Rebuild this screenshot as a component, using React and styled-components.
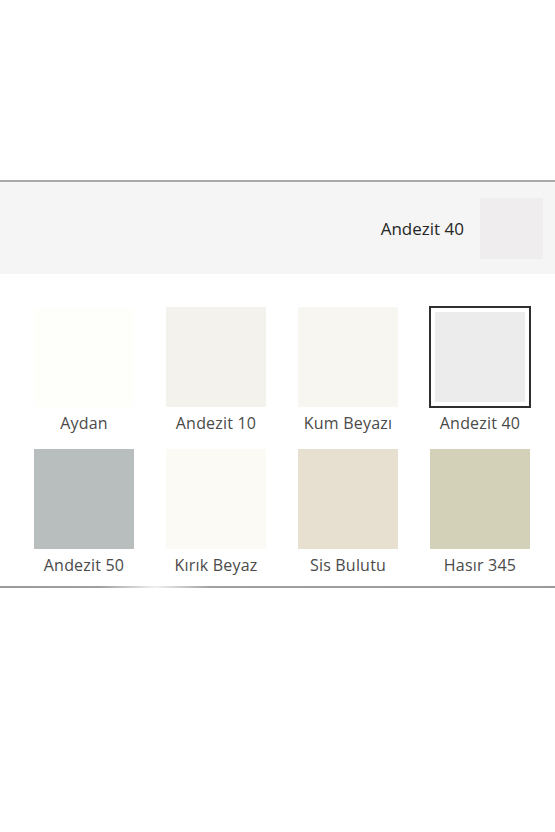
import React from "react";
import styled, { createGlobalStyle } from "styled-components";

const GlobalStyle = createGlobalStyle`
  body {
    margin: 0;
    background: #ffffff;
    font-family: "Open Sans", "Liberation Sans", sans-serif;
  }
`;

const Page = styled.div`
  width: 555px;
  min-height: 832px;
  padding-top: 180px;
  box-sizing: border-box;
  background: #fff;
`;

const Panel = styled.div`
  border-top: 2px solid #a9a9a9;
`;

const SelectedBar = styled.div`
  height: 92px;
  background: #f4f5f4;
  display: flex;
  align-items: center;
  justify-content: flex-end;
  gap: 16px;
  padding-right: 12px;
`;

const SelectedName = styled.span`
  font-size: 17px;
  color: #262626;
`;

const SelectedChip = styled.div`
  width: 63px;
  height: 61px;
  background: ${(p) => p.color};
`;

const Grid = styled.div`
  display: grid;
  grid-template-columns: repeat(4, 132px);
  row-gap: 16px;
  padding: 33px 0 11px 18px;
`;

const Cell = styled.div`
  display: flex;
  flex-direction: column;
  align-items: center;
`;

const Swatch = styled.div`
  width: 100px;
  height: 100px;
  box-sizing: border-box;
  background: ${(p) => p.color};
  ${(p) =>
    p.selected &&
    `
    outline: 2px solid #2f2f2f;
    outline-offset: -1px;
    box-shadow: inset 0 0 0 5px #fff;
  `}
`;

const Label = styled.span`
  margin-top: 6px;
  font-size: 16px;
  line-height: 20px;
  letter-spacing: 0.2px;
  color: #4a4a4a;
`;

const BottomLine = styled.div`
  height: 2px;
  background: linear-gradient(
    to right,
    #9a9a9a 0%,
    #a0a0a0 18%,
    #f0f0f0 28%,
    #a0a0a0 38%,
    #9a9a9a 100%
  );
`;

const colors = [
  { name: "Aydan", color: "#fefefb" },
  { name: "Andezit 10", color: "#f3f2ec" },
  { name: "Kum Beyazı", color: "#f8f6f1" },
  { name: "Andezit 40", color: "#ececec", selected: true },
  { name: "Andezit 50", color: "#b8bebe" },
  { name: "Kırık Beyaz", color: "#fbfaf5" },
  { name: "Sis Bulutu", color: "#e7e0d0" },
  { name: "Hasır 345", color: "#d3d1b8" },
];

export default function App() {
  const current = colors.find((c) => c.selected);
  return (
    <Page>
      <GlobalStyle />
      <Panel>
        <SelectedBar>
          <SelectedName>{current.name}</SelectedName>
          <SelectedChip color="#efeded" />
        </SelectedBar>
        <Grid>
          {colors.map((c) => (
            <Cell key={c.name}>
              <Swatch color={c.color} selected={c.selected} />
              <Label>{c.name}</Label>
            </Cell>
          ))}
        </Grid>
        <BottomLine />
      </Panel>
    </Page>
  );
}
